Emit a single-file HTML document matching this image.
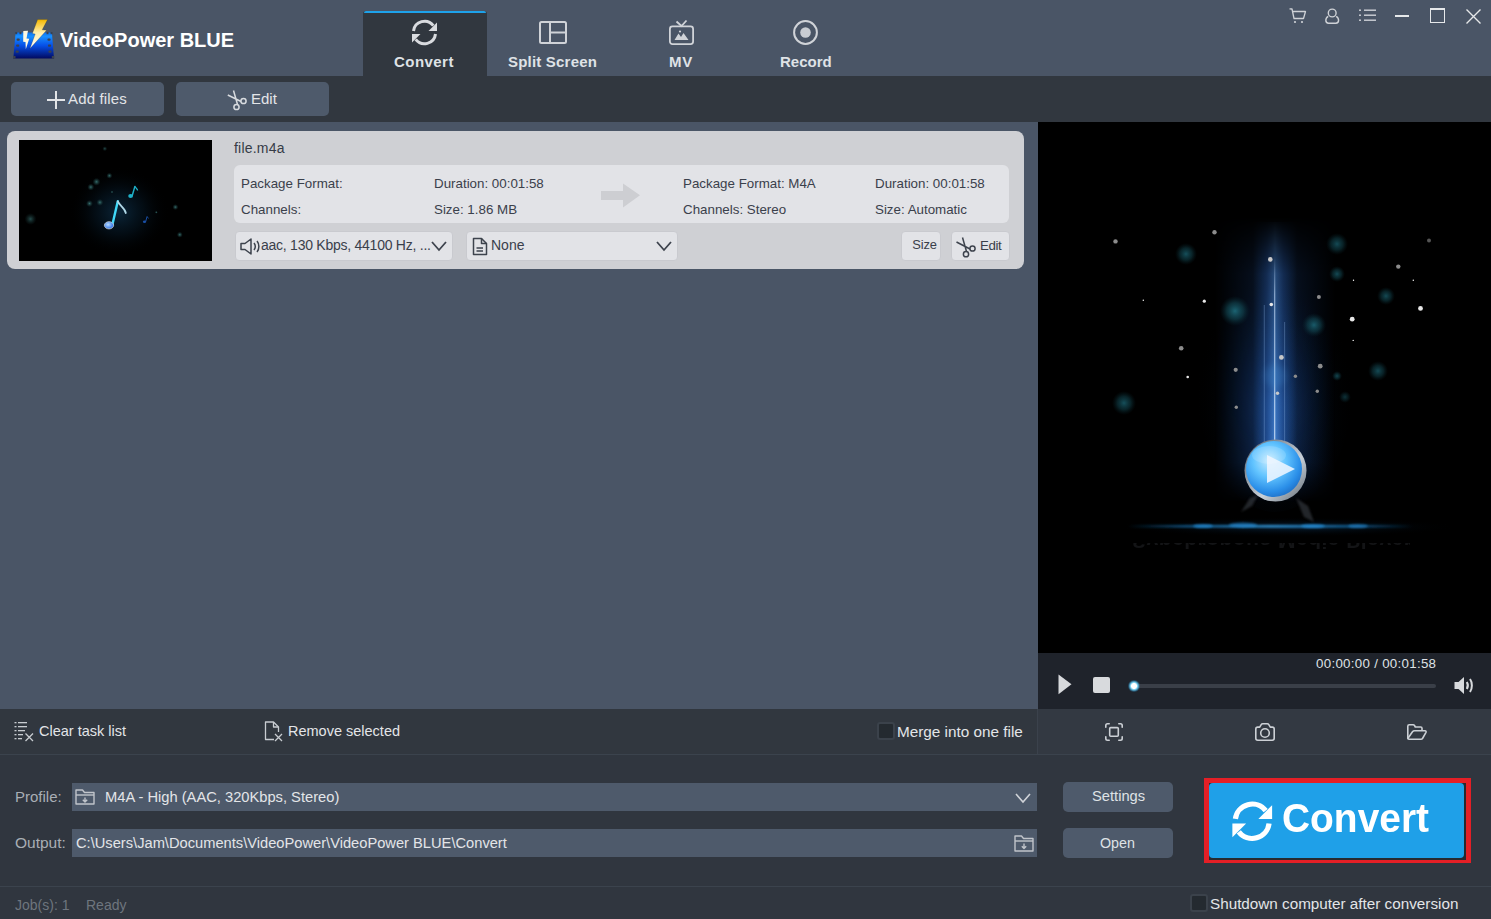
<!DOCTYPE html>
<html><head><meta charset="utf-8">
<style>
html,body{margin:0;padding:0;}
body{width:1491px;height:919px;overflow:hidden;position:relative;background:#30363f;font-family:"Liberation Sans",sans-serif;}
.a{position:absolute;}
.t{position:absolute;line-height:1;white-space:nowrap;}
svg{position:absolute;overflow:visible;}
.tab{color:#dfe2e6;font-weight:bold;font-size:15px;}
.ct{color:#3a404b;font-size:13.35px;}
.btn{position:absolute;background:#4e5a6b;border-radius:5px;}
.cbtn{position:absolute;background:#e2e3e7;border:1px solid #c9cacf;border-radius:4px;box-sizing:border-box;}
</style></head><body>

<!-- title bar -->
<div class="a" style="left:0;top:0;width:1491px;height:76px;background:#4a5566;"></div>
<!-- toolbar -->
<div class="a" style="left:0;top:76px;width:1491px;height:46px;background:#31373f;"></div>
<!-- list area -->
<div class="a" style="left:0;top:122px;width:1038px;height:587px;background:#4a5566;"></div>
<!-- preview -->
<div class="a" style="left:1038px;top:122px;width:453px;height:531px;background:#000;"></div>
<!-- player controls -->
<div class="a" style="left:1038px;top:653px;width:453px;height:56px;background:#1f232b;"></div>
<!-- action bar -->
<div class="a" style="left:0;top:709px;width:1491px;height:45px;background:#31373f;"></div>
<div class="a" style="left:1038px;top:709px;width:453px;height:45px;background:#333942;"></div>
<div class="a" style="left:1037px;top:709px;width:1px;height:45px;background:#3b424c;"></div>
<div class="a" style="left:0;top:754px;width:1491px;height:1px;background:#3b434d;"></div>
<!-- status line -->
<div class="a" style="left:0;top:886px;width:1491px;height:1px;background:#3b434d;"></div>

<!-- ===== TITLE BAR ===== -->
<!-- LOGO -->
<svg style="left:0;top:0" width="70" height="70" viewBox="0 0 70 70">
  <defs>
    <linearGradient id="lgBlue" x1="0" y1="0" x2="0" y2="1">
      <stop offset="0" stop-color="#0a70f0"/><stop offset="0.15" stop-color="#1890ff"/><stop offset="0.5" stop-color="#0650e8"/><stop offset="1" stop-color="#020a60"/>
    </linearGradient>
    <linearGradient id="lgBolt" x1="0" y1="0" x2="0" y2="1">
      <stop offset="0" stop-color="#f5b800"/><stop offset="0.45" stop-color="#ffeeaa"/><stop offset="1" stop-color="#ffffff"/>
    </linearGradient>
  </defs>
  <path d="M15.6 32.4 L51.9 32.4 L54 58.5 L13.3 58.5 Z" fill="url(#lgBlue)"/>
  <g fill="#3a4250">
    <rect x="15.2" y="32" width="2" height="2.2"/><rect x="19.5" y="32" width="2" height="2.2"/>
    <rect x="46.5" y="32" width="2" height="2.2"/><rect x="50.5" y="32" width="2" height="2.2"/>
    <rect x="16.6" y="38.5" width="3.2" height="2.2" rx="1"/><rect x="16.1" y="44.6" width="3.2" height="2.2" rx="1"/><rect x="15.6" y="50.6" width="3.2" height="2.2" rx="1"/>
    <rect x="47.4" y="38.5" width="3.2" height="2.2" rx="1"/><rect x="47.9" y="44.6" width="3.2" height="2.2" rx="1"/><rect x="48.4" y="50.6" width="3.2" height="2.2" rx="1"/>
    <rect x="13" y="56" width="2.5" height="2.6"/><rect x="51.8" y="56" width="2.5" height="2.6"/>
  </g>
  <path d="M37.6 19.6 L47.6 19.6 L42.2 29.8 L46.6 30.3 L30 48.5 L35.2 34 L32.4 33.5 Z" fill="url(#lgBolt)" stroke="#2a2a20" stroke-width="0.4" stroke-opacity="0.6"/>
  <path d="M23.3 31 L28 30.8 L26.5 38.5 L29.2 38.8 L25.8 49.3 L25.5 42 L23.2 41.8 Z" fill="#fff8e0"/>
</svg>
<div class="t" style="left:60px;top:29.8px;font-size:20px;font-weight:bold;color:#fff;">VideoPower BLUE</div>

<!-- TABS -->
<div class="a" style="left:363px;top:11px;width:124px;height:65px;background:#31373f;border-radius:3px 3px 0 0;"></div>
<div class="a" style="left:364px;top:11px;width:122px;height:2px;background:#1ea2ea;border-radius:2px 2px 0 0;"></div>

<!-- convert icon -->
<svg style="left:408px;top:16px" width="34" height="34" viewBox="0 0 34 34">
  <g fill="none" stroke="#d9dbdf" stroke-width="3">
    <path d="M5.5 15 A11.1 11.1 0 0 1 25.3 9.6"/>
    <path d="M27.5 18 A11.1 11.1 0 0 1 7.7 23.4"/>
  </g>
  <path d="M20.5 15 L29 15 L29 6.5 Z" fill="#d9dbdf"/>
  <path d="M4 18 L12.5 18 L4 26.5 Z" fill="#d9dbdf"/>
</svg>
<div class="t tab" style="left:394px;top:54px;letter-spacing:0.45px;">Convert</div>

<!-- split screen icon -->
<svg style="left:539px;top:21px" width="28" height="23" viewBox="0 0 28 23">
  <g fill="none" stroke="#d0d3d8" stroke-width="2">
    <rect x="1" y="1" width="26" height="21" rx="1.5"/>
    <path d="M11 1 V22 M11 11.5 H27"/>
  </g>
</svg>
<div class="t tab" style="left:508px;top:54px;letter-spacing:0.2px;">Split Screen</div>

<!-- MV icon -->
<svg style="left:669px;top:20px" width="25" height="25" viewBox="0 0 25 25">
  <g fill="none" stroke="#d0d3d8" stroke-width="1.8">
    <rect x="0.9" y="6.4" width="23.2" height="17.7" rx="2.5"/>
    <path d="M7.5 1.5 L12.5 6 L17.5 0.5"/>
  </g>
  <path d="M5.5 20 L9.5 13.5 L12 17 L14.5 13 L19.5 20 Z" fill="#d0d3d8"/>
  <circle cx="11" cy="11.5" r="1.1" fill="#d0d3d8"/>
</svg>
<div class="t tab" style="left:669px;top:54px;letter-spacing:0.7px;">MV</div>

<!-- record icon -->
<svg style="left:793px;top:20px" width="25" height="25" viewBox="0 0 25 25">
  <circle cx="12.5" cy="12.5" r="11.4" fill="none" stroke="#d0d3d8" stroke-width="2"/>
  <circle cx="12.5" cy="12.5" r="5.3" fill="#c8ccd2"/>
</svg>
<div class="t tab" style="left:780px;top:54px;">Record</div>

<!-- window controls -->
<svg style="left:1289px;top:8px" width="18" height="16" viewBox="0 0 18 16">
  <g fill="none" stroke="#cfd2d7" stroke-width="1.3" stroke-linejoin="round">
    <path d="M0.5 0.8 L3 1 L5 10.5 L14.5 10.5 L16.5 3.5 L3.8 3.5"/>
  </g>
  <circle cx="6" cy="14" r="1.1" fill="#cfd2d7"/><circle cx="13" cy="14" r="1.1" fill="#cfd2d7"/>
</svg>
<svg style="left:1325px;top:8px" width="15" height="16" viewBox="0 0 15 16">
  <g fill="none" stroke="#cfd2d7" stroke-width="1.4">
    <circle cx="7.2" cy="5" r="3.9"/>
    <path d="M3.2 8.3 C0 10 0 15.2 3.5 15.2 L10.9 15.2 C14.4 15.2 14.4 10 11.2 8.3"/>
  </g>
</svg>
<svg style="left:1359px;top:9px" width="17" height="13" viewBox="0 0 17 13">
  <g fill="#cfd2d7">
    <rect x="0" y="0.5" width="2" height="1.4"/><rect x="0" y="5.5" width="2" height="1.4"/><rect x="0" y="10.5" width="2" height="1.4"/>
    <rect x="5" y="0.5" width="12" height="1.4"/><rect x="5" y="5.5" width="12" height="1.4"/><rect x="5" y="10.5" width="12" height="1.4"/>
  </g>
</svg>
<div class="a" style="left:1395px;top:15px;width:14px;height:2px;background:#e6e8ea;"></div>
<div class="a" style="left:1430px;top:8px;width:13px;height:12px;border:1px solid #e6e8ea;border-top-width:2px;"></div>
<svg style="left:1466px;top:8.5px" width="15" height="15" viewBox="0 0 15 15">
  <path d="M0.5 0.5 L14.5 14.5 M14.5 0.5 L0.5 14.5" stroke="#e6e8ea" stroke-width="1.4"/>
</svg>

<!-- ===== TOOLBAR ===== -->
<div class="btn" style="left:11px;top:82px;width:153px;height:34px;"></div>
<div class="btn" style="left:176px;top:82px;width:153px;height:34px;"></div>
<svg style="left:47px;top:91px" width="18" height="18" viewBox="0 0 18 18">
  <path d="M9 0 V18 M0 9 H18" stroke="#e3e5e8" stroke-width="2"/>
</svg>
<div class="t" style="left:68px;top:91.3px;font-size:15px;color:#e3e5e8;letter-spacing:0.15px;">Add files</div>
<svg style="left:227px;top:90px" width="21" height="21" viewBox="0 0 21 21">
  <g fill="none" stroke="#d8dbdf" stroke-width="1.5">
    <circle cx="9.5" cy="17" r="2.6"/><circle cx="16.5" cy="11" r="2.6"/>
    <path d="M10.5 14.5 L6.5 0.5 M14 11.5 L0.8 5"/>
  </g>
</svg>
<div class="t" style="left:251px;top:91.3px;font-size:15px;color:#e3e5e8;">Edit</div>


<!-- ===== CARD ===== -->
<div class="a" style="left:7px;top:131px;width:1017px;height:138px;background:#cfd0d4;border-radius:8px;"></div>
<!-- thumbnail -->
<svg style="left:19px;top:140px" width="193" height="121" viewBox="0 0 193 121">
  <defs>
    <radialGradient id="thGlow" cx="0.5" cy="0.5" r="0.5">
      <stop offset="0" stop-color="#0c2a40" stop-opacity="0.9"/><stop offset="0.5" stop-color="#051420" stop-opacity="0.6"/><stop offset="1" stop-color="#000" stop-opacity="0"/>
    </radialGradient>
    <radialGradient id="dotG" cx="0.5" cy="0.5" r="0.5">
      <stop offset="0" stop-color="#3c7878" stop-opacity="0.9"/><stop offset="1" stop-color="#1a4040" stop-opacity="0"/>
    </radialGradient>
    <radialGradient id="headG" cx="0.4" cy="0.4" r="0.6">
      <stop offset="0" stop-color="#b8dcff"/><stop offset="1" stop-color="#2a70e8"/>
    </radialGradient>
  </defs>
  <rect width="193" height="121" fill="#000"/>
  <ellipse cx="100" cy="72" rx="50" ry="45" fill="url(#thGlow)"/>
  <circle cx="77.5" cy="41.8" r="4" fill="url(#dotG)"/>
  <circle cx="71.8" cy="47.1" r="3.5" fill="url(#dotG)"/>
  <circle cx="90.4" cy="35.7" r="3" fill="url(#dotG)"/>
  <circle cx="80.9" cy="62.4" r="3.5" fill="url(#dotG)"/>
  <circle cx="70.5" cy="63.5" r="3.5" fill="url(#dotG)"/>
  <circle cx="93" cy="52" r="1.5" fill="url(#dotG)"/>
  <circle cx="11.5" cy="79" r="6" fill="url(#dotG)" opacity="0.7"/>
  <circle cx="156.4" cy="67.1" r="3" fill="url(#dotG)"/>
  <circle cx="160.8" cy="94.7" r="3" fill="url(#dotG)"/>
  <circle cx="85.8" cy="8.7" r="2.5" fill="url(#dotG)" opacity="0.7"/>
  <circle cx="137.3" cy="72.3" r="1.5" fill="url(#dotG)"/>
  <path d="M98.8 61.2 L93.3 85" stroke="#40d8f8" stroke-width="2.4" stroke-linecap="round"/>
  <path d="M98.8 61.5 C101 66 106 68 106.8 73" stroke="#b0d8e8" stroke-width="1.8" fill="none" stroke-linecap="round"/>
  <ellipse cx="90" cy="85.3" rx="4.6" ry="3.6" fill="url(#headG)" stroke="#c8d0d8" stroke-width="0.8"/>
  <path d="M115.9 46.4 L113.3 55.4" stroke="#1eb0c8" stroke-width="1.5" stroke-linecap="round"/>
  <path d="M116 46.5 C117 48.5 118.6 49 118.6 50.5" stroke="#1eb0c8" stroke-width="1.2" fill="none"/>
  <ellipse cx="111.6" cy="56" rx="2.4" ry="1.9" fill="#1eb0c8"/>
  <path d="M128.1 76.5 L126.6 81.8" stroke="#1a50a8" stroke-width="1"/>
  <path d="M128.1 76.5 L129.5 78.5" stroke="#1a50a8" stroke-width="0.8"/>
  <ellipse cx="125.5" cy="81.8" rx="1.6" ry="1.3" fill="#1a50a8"/>
</svg>

<div class="t" style="left:234px;top:140.8px;font-size:14px;color:#363c47;letter-spacing:0.2px;">file.m4a</div>
<div class="a" style="left:234px;top:165px;width:775px;height:58px;background:#e2e3e7;border-radius:6px;"></div>
<div class="t ct" style="left:241px;top:177px;">Package Format:</div>
<div class="t ct" style="left:241px;top:202.6px;">Channels:</div>
<div class="t ct" style="left:434px;top:177px;">Duration: 00:01:58</div>
<div class="t ct" style="left:434px;top:202.6px;">Size: 1.86 MB</div>
<div class="t ct" style="left:683px;top:177px;">Package Format: M4A</div>
<div class="t ct" style="left:683px;top:202.6px;">Channels: Stereo</div>
<div class="t ct" style="left:875px;top:177px;">Duration: 00:01:58</div>
<div class="t ct" style="left:875px;top:202.6px;">Size: Automatic</div>
<!-- arrow -->
<svg style="left:601px;top:183px" width="40" height="25" viewBox="0 0 40 25">
  <path d="M0 8 H22 V0.5 L39 12.2 L22 24.5 V17 H0 Z" fill="#cdced2"/>
</svg>

<!-- dropdown 1 -->
<div class="cbtn" style="left:235px;top:231px;width:217.5px;height:30px;"></div>
<svg style="left:240px;top:238px" width="22" height="17" viewBox="0 0 22 17">
  <g fill="none" stroke="#3d434d" stroke-width="1.5" stroke-linejoin="round">
    <path d="M1 5.5 H5 L11 1 V16 L5 11.5 H1 Z"/>
    <path d="M14 5 C15.5 7 15.5 10 14 12"/>
    <path d="M17 3 C19.5 6 19.5 11 17 14"/>
  </g>
</svg>
<div class="t ct" style="left:261px;top:238px;font-size:14px;letter-spacing:-0.25px;">aac, 130 Kbps, 44100 Hz, ...</div>
<svg style="left:431px;top:241px" width="16" height="10" viewBox="0 0 16 10">
  <path d="M1 1 L8 9 L15 1" fill="none" stroke="#3d434d" stroke-width="1.8"/>
</svg>
<!-- dropdown 2 -->
<div class="cbtn" style="left:465.5px;top:231px;width:212px;height:30px;"></div>
<svg style="left:472px;top:237px" width="17" height="19" viewBox="0 0 17 19">
  <g fill="none" stroke="#3d434d" stroke-width="1.5" stroke-linejoin="round">
    <path d="M1.5 1.5 H9.5 L14.5 6.5 V17.5 H1.5 Z"/>
    <path d="M9.5 1.5 V6.5 H14.5"/>
    <path d="M4.5 11 H11 M4.5 14 H11"/>
  </g>
</svg>
<div class="t ct" style="left:491px;top:238px;font-size:14px;">None</div>
<svg style="left:656px;top:241px" width="16" height="10" viewBox="0 0 16 10">
  <path d="M1 1 L8 9 L15 1" fill="none" stroke="#3d434d" stroke-width="1.8"/>
</svg>
<!-- size / edit -->
<div class="cbtn" style="left:901px;top:231px;width:40px;height:30px;"></div>
<div class="t ct" style="left:912.3px;top:238.8px;font-size:12.9px;letter-spacing:-0.15px;">Size</div>
<div class="cbtn" style="left:951px;top:231px;width:59px;height:30px;"></div>
<svg style="left:955px;top:236px" width="22" height="22" viewBox="0 0 22 22">
  <g fill="none" stroke="#3d434d" stroke-width="1.5">
    <circle cx="11" cy="18.2" r="2.6"/><circle cx="17.5" cy="12.5" r="2.6"/>
    <path d="M11.5 15.5 L7.5 1.5 M15 13 L1.5 6"/>
  </g>
</svg>
<div class="t ct" style="left:980px;top:238.5px;font-size:13.3px;letter-spacing:-0.4px;">Edit</div>


<!-- ===== PREVIEW ===== -->
<svg style="left:1038px;top:122px" width="453" height="531" viewBox="0 0 453 531">
  <defs>
    <radialGradient id="beamGlow" cx="0.5" cy="0.62" r="0.5">
      <stop offset="0" stop-color="#1a4a90" stop-opacity="0.5"/>
      <stop offset="0.4" stop-color="#0c2a5a" stop-opacity="0.28"/>
      <stop offset="0.75" stop-color="#04101e" stop-opacity="0.12"/>
      <stop offset="1" stop-color="#000" stop-opacity="0"/>
    </radialGradient>
    <linearGradient id="beamH" x1="0" y1="0" x2="1" y2="0">
      <stop offset="0" stop-color="#2060c0" stop-opacity="0"/>
      <stop offset="0.3" stop-color="#2a66c8" stop-opacity="0.55"/>
      <stop offset="0.5" stop-color="#4a90e8" stop-opacity="0.95"/>
      <stop offset="0.7" stop-color="#2a66c8" stop-opacity="0.55"/>
      <stop offset="1" stop-color="#2060c0" stop-opacity="0"/>
    </linearGradient>
    <linearGradient id="beamV" x1="0" y1="0" x2="0" y2="1">
      <stop offset="0" stop-color="#fff" stop-opacity="0"/>
      <stop offset="0.2" stop-color="#fff" stop-opacity="0.6"/>
      <stop offset="0.6" stop-color="#fff" stop-opacity="0.8"/>
      <stop offset="0.86" stop-color="#fff" stop-opacity="1"/>
      <stop offset="1" stop-color="#fff" stop-opacity="0"/>
    </linearGradient>
    <linearGradient id="lineV" x1="0" y1="0" x2="0" y2="1"><stop offset="0" stop-color="#cfe4ff" stop-opacity="0"/><stop offset="0.2" stop-color="#cfe4ff" stop-opacity="0.55"/><stop offset="1" stop-color="#e0efff" stop-opacity="0.7"/></linearGradient>
    <mask id="beamMask"><rect x="150" y="95" width="180" height="285" fill="url(#beamV)"/></mask>
    <radialGradient id="tealDot" cx="0.5" cy="0.5" r="0.5">
      <stop offset="0" stop-color="#1e6e7e" stop-opacity="0.9"/><stop offset="0.55" stop-color="#14505c" stop-opacity="0.55"/><stop offset="1" stop-color="#0a3038" stop-opacity="0"/>
    </radialGradient>
    <radialGradient id="ballG" cx="0.42" cy="0.35" r="0.65">
      <stop offset="0" stop-color="#c8ecff"/>
      <stop offset="0.45" stop-color="#62c4ff"/>
      <stop offset="0.85" stop-color="#2a8ee8"/>
      <stop offset="1" stop-color="#2278d0"/>
    </radialGradient>
    <linearGradient id="rimG" x1="0" y1="0" x2="1" y2="1">
      <stop offset="0" stop-color="#505862"/><stop offset="0.6" stop-color="#c8d0d8"/><stop offset="1" stop-color="#606a74"/>
    </linearGradient>
    <linearGradient id="horizG" x1="0" y1="0" x2="1" y2="0">
      <stop offset="0" stop-color="#1a8ad8" stop-opacity="0"/>
      <stop offset="0.2" stop-color="#1a8ad8" stop-opacity="0.55"/>
      <stop offset="0.5" stop-color="#3aaaf0" stop-opacity="0.8"/>
      <stop offset="0.8" stop-color="#1a8ad8" stop-opacity="0.55"/>
      <stop offset="1" stop-color="#1a8ad8" stop-opacity="0"/>
    </linearGradient>
    <radialGradient id="horizGlow" cx="0.5" cy="0.5" r="0.5">
      <stop offset="0" stop-color="#0e4a80" stop-opacity="0.45"/><stop offset="1" stop-color="#000" stop-opacity="0"/>
    </radialGradient>
    <filter id="blur1" x="-50%" y="-50%" width="200%" height="200%"><feGaussianBlur stdDeviation="1.2"/></filter>
    <filter id="blur3" x="-50%" y="-50%" width="200%" height="200%"><feGaussianBlur stdDeviation="3"/></filter>
  </defs>
  <!-- broad glow behind beam -->
  <ellipse cx="237" cy="250" rx="80" ry="140" fill="url(#beamGlow)"/>
  <!-- beam -->
  <g mask="url(#beamMask)">
    <rect x="177" y="95" width="120" height="285" fill="url(#beamH)" opacity="0.4"/>
    <rect x="215" y="100" width="44" height="280" fill="url(#beamH)" opacity="0.85"/>
  </g>
  <rect x="236" y="135" width="1.3" height="187" fill="url(#lineV)"/>
  <rect x="225.8" y="183" width="0.9" height="140" fill="#9cc4f0" opacity="0.35"/>
  <rect x="246.2" y="200" width="0.9" height="125" fill="#9cc4f0" opacity="0.35"/>
  <!-- teal bokeh -->
  <circle cx="148" cy="132" r="11" fill="url(#tealDot)" opacity="0.8"/>
  <circle cx="299" cy="122" r="11" fill="url(#tealDot)" opacity="0.75"/>
  <circle cx="299" cy="152" r="8" fill="url(#tealDot)" opacity="0.75"/>
  <circle cx="197" cy="189" r="15" fill="url(#tealDot)"/>
  <circle cx="276" cy="203" r="12" fill="url(#tealDot)" opacity="0.9"/>
  <circle cx="348" cy="174" r="9" fill="url(#tealDot)" opacity="0.75"/>
  <circle cx="340" cy="249" r="10" fill="url(#tealDot)" opacity="0.75"/>
  <circle cx="86" cy="281" r="12" fill="url(#tealDot)" opacity="0.8"/>
  <circle cx="299" cy="254" r="5" fill="url(#tealDot)" opacity="0.7"/>
  <circle cx="307" cy="275" r="6" fill="url(#tealDot)" opacity="0.5"/>
  <circle cx="237" cy="254" r="11" fill="#4a9ae0" opacity="0.22" filter="url(#blur3)"/>
  <!-- stars -->
  <g fill="#8c8c8c">
    <circle cx="77.5" cy="119.4" r="2.2"/><circle cx="176.5" cy="110.3" r="2.2"/>
    <circle cx="391" cy="118.5" r="2" opacity="0.6"/><circle cx="360.3" cy="144.6" r="2.2"/>
    <circle cx="280.9" cy="175" r="2"/><circle cx="143.2" cy="226.2" r="2.3"/><circle cx="197.7" cy="247.8" r="2.1"/>
    <circle cx="282.2" cy="244.2" r="2.4"/>
    <circle cx="257.4" cy="254.3" r="1.7"/><circle cx="279.3" cy="269.3" r="1.7"/><circle cx="198.3" cy="285.3" r="1.7"/>
  </g>
  <g fill="#c8c8c8"><circle cx="243.4" cy="235.4" r="2.4"/><circle cx="239.5" cy="271.3" r="1.7"/><circle cx="232.3" cy="137.4" r="2.3"/></g>
  <g fill="#e8e8e8">
    <circle cx="166.3" cy="179.2" r="1.6"/><circle cx="233.3" cy="182.5" r="1.8"/><circle cx="382.5" cy="186.4" r="2.4"/>
    <circle cx="314.2" cy="197.2" r="2.4"/><circle cx="149.7" cy="255" r="1.3"/>
  </g>
  <g fill="#ffffff">
    <circle cx="105.3" cy="178.2" r="0.7"/><circle cx="315.5" cy="158.3" r="0.7"/><circle cx="375.3" cy="158.3" r="0.7"/><circle cx="315.2" cy="218.4" r="0.7"/>
  </g>
  <!-- horizon -->
  <ellipse cx="250" cy="405" rx="170" ry="10" fill="url(#horizGlow)"/>
  <rect x="90" y="403" width="285" height="2.5" fill="url(#horizG)" filter="url(#blur1)"/>
  <g fill="#2a98e8" filter="url(#blur1)">
    <ellipse cx="165" cy="404" rx="10" ry="2" opacity="0.6"/>
    <ellipse cx="205" cy="403" rx="14" ry="2.5" opacity="0.55"/>
    <ellipse cx="275" cy="404" rx="12" ry="2" opacity="0.6"/>
    <ellipse cx="320" cy="404" rx="10" ry="2" opacity="0.5"/>
  </g>
  <!-- splash -->
  <g fill="#3a3f46" filter="url(#blur1)" opacity="0.6">
    <path d="M203 390 L212 376 L220 373 L214 384 Z"/>
    <path d="M258 376 L270 384 L276 400 L266 395 Z"/>
  </g>
  <!-- faint reflection text -->
  
  <!-- ball -->
  <circle cx="237.5" cy="348.5" r="31" fill="url(#rimG)"/>
  <circle cx="236" cy="347" r="28" fill="url(#ballG)"/>
  <path d="M229 333 L257 347 L229 361 Z" fill="#eaf4ff" opacity="0.9"/>
  <ellipse cx="231" cy="333" rx="17" ry="9" fill="#ffffff" opacity="0.15"/>
</svg>

<div class="a" style="left:1132px;top:543px;width:278px;height:10px;overflow:hidden;">
  <div class="t" style="left:0;top:-12px;font-size:21px;font-weight:bold;color:#131416;transform:scaleY(-1);letter-spacing:0.5px;">Synchronous Media Player</div>
</div>
<!-- ===== PLAYER CONTROLS ===== -->
<div class="t" style="left:1316px;top:657.2px;font-size:13.3px;color:#dfe2e6;letter-spacing:0.3px;">00:00:00 / 00:01:58</div>
<svg style="left:1058px;top:674px" width="14" height="21" viewBox="0 0 14 21">
  <path d="M0.5 0.5 L13.5 10.3 L0.5 20.2 Z" fill="#d8dadd"/>
</svg>
<div class="a" style="left:1093px;top:676.5px;width:17px;height:16px;background:#d8dadd;border-radius:2px;"></div>
<div class="a" style="left:1134px;top:684px;width:302px;height:4px;background:#3a3f48;border-radius:2px;"></div>
<div class="a" style="left:1128px;top:680px;width:12px;height:12px;border-radius:50%;background:radial-gradient(circle,#ffffff 0,#ffffff 30%,#68c4e8 45%,rgba(40,130,180,0.4) 65%,rgba(0,0,0,0) 100%);"></div>
<svg style="left:1454px;top:676px" width="21" height="19" viewBox="0 0 21 19">
  <path d="M0.5 6 H4.5 L10 1 V18 L4.5 13 H0.5 Z" fill="#d8dadd"/>
  <g fill="none" stroke="#d8dadd" stroke-width="2">
    <path d="M12.8 6 C14 8 14 11 12.8 13"/>
    <path d="M16 3 C18.5 6.5 18.5 12.5 16 16"/>
  </g>
</svg>

<!-- ===== ACTION BAR ===== -->
<svg style="left:14px;top:721px" width="20" height="20" viewBox="0 0 20 20">
  <g fill="#c8ccd1">
    <rect x="0.5" y="1" width="2" height="1.3"/><rect x="4" y="1" width="9" height="1.3"/>
    <rect x="0.5" y="5" width="2" height="1.3"/><rect x="4" y="5" width="9" height="1.3"/>
    <rect x="0.5" y="9" width="2" height="1.3"/><rect x="4" y="9" width="7" height="1.3"/>
    <rect x="0.5" y="13" width="2" height="1.3"/><rect x="4" y="13" width="5" height="1.3"/>
    <rect x="0.5" y="17" width="2" height="1.3"/><rect x="4" y="17" width="4" height="1.3"/>
  </g>
  <path d="M11.5 12.5 L19 20 M19 12.5 L11.5 20" stroke="#c8ccd1" stroke-width="1.3"/>
</svg>
<div class="t" style="left:39px;top:724.2px;font-size:14.5px;color:#e3e5e8;">Clear task list</div>
<svg style="left:264px;top:721px" width="20" height="21" viewBox="0 0 20 21">
  <g fill="none" stroke="#c8ccd1" stroke-width="1.3" stroke-linejoin="round">
    <path d="M10 18.5 H1.5 V1 H9.5 L14.5 6 V11"/>
    <path d="M9.5 1 V6 H14.5"/>
  </g>
  <path d="M11 13 L18 20 M18 13 L11 20" stroke="#c8ccd1" stroke-width="1.3"/>
</svg>
<div class="t" style="left:288px;top:724.2px;font-size:14.5px;color:#e3e5e8;">Remove selected</div>
<div class="a" style="left:877px;top:722px;width:18px;height:18px;box-sizing:border-box;background:#242a30;border:2px solid #3b424b;border-radius:3px;"></div>
<div class="t" style="left:897px;top:724px;font-size:15.3px;color:#e3e5e8;">Merge into one file</div>
<!-- fullscreen -->
<svg style="left:1105px;top:723px" width="18" height="18" viewBox="0 0 18 18">
  <g fill="none" stroke="#ccd0d5" stroke-width="1.6" stroke-linecap="round">
    <path d="M0.8 4.2 V2.5 Q0.8 0.8 2.5 0.8 H4.2"/>
    <path d="M13.8 0.8 H15.5 Q17.2 0.8 17.2 2.5 V4.2"/>
    <path d="M17.2 13.8 V15.5 Q17.2 17.2 15.5 17.2 H13.8"/>
    <path d="M4.2 17.2 H2.5 Q0.8 17.2 0.8 15.5 V13.8"/>
    <rect x="4.7" y="4.6" width="8.6" height="8.6" rx="1"/>
  </g>
</svg>
<!-- camera -->
<svg style="left:1255px;top:723px" width="20" height="18" viewBox="0 0 20 18">
  <g fill="none" stroke="#ccd0d5" stroke-width="1.6" stroke-linejoin="round">
    <path d="M0.8 6 Q0.8 4.1 2.7 4.1 H4.7 L6.2 1.6 Q6.7 0.8 7.7 0.8 H12.3 Q13.3 0.8 13.8 1.6 L15.3 4.1 H17.3 Q19.2 4.1 19.2 6 V15.3 Q19.2 17.2 17.3 17.2 H2.7 Q0.8 17.2 0.8 15.3 Z"/>
    <circle cx="10" cy="10" r="4.3"/>
  </g>
</svg>
<!-- folder open -->
<svg style="left:1407px;top:724px" width="20" height="16" viewBox="0 0 20 16">
  <g fill="none" stroke="#ccd0d5" stroke-width="1.6" stroke-linejoin="round">
    <path d="M0.8 14.5 V2.2 Q0.8 0.8 2.2 0.8 H6.2 Q7 0.8 7.5 1.5 L8.3 3 H13.7 Q15 3 15 4.3 V6.8"/>
    <path d="M0.8 14.5 Q1.2 15.2 2.2 15.2 H14 Q15 15.2 15.5 14.5 L19 8.3 Q19.4 6.8 18 6.8 H7.5 Q6.3 6.8 5.5 7.8 Z"/>
  </g>
</svg>

<!-- ===== BOTTOM PANEL ===== -->
<div class="t" style="left:15px;top:789.3px;font-size:15px;color:#a9aeb5;">Profile:</div>
<div class="a" style="left:72px;top:783px;width:965px;height:28px;background:#4e5a6b;"></div>
<svg style="left:75px;top:789px" width="20" height="16" viewBox="0 0 20 16">
  <g fill="none" stroke="#c0c4ca" stroke-width="1.4" stroke-linejoin="round">
    <path d="M1 15 V1 H7.5 L9.5 3.5 H19 V15 Z"/>
    <path d="M1 6 H19"/>
    <path d="M10 8.5 V13 M7.8 10.8 L10 13 L12.2 10.8"/>
  </g>
</svg>
<div class="t" style="left:105px;top:789.5px;font-size:14.7px;color:#e3e5e8;">M4A - High (AAC, 320Kbps, Stereo)</div>
<svg style="left:1015px;top:793px" width="16" height="10" viewBox="0 0 16 10">
  <path d="M1 1 L8 9 L15 1" fill="none" stroke="#d0d3d8" stroke-width="1.6"/>
</svg>
<div class="t" style="left:15px;top:835.3px;font-size:15.5px;color:#a9aeb5;">Output:</div>
<div class="a" style="left:72px;top:829px;width:965px;height:28px;background:#4e5a6b;"></div>
<div class="t" style="left:76px;top:836px;font-size:14.68px;color:#e3e5e8;">C:\Users\Jam\Documents\VideoPower\VideoPower BLUE\Convert</div>
<svg style="left:1014px;top:835px" width="20" height="17" viewBox="0 0 20 17">
  <g fill="none" stroke="#c0c4ca" stroke-width="1.4" stroke-linejoin="round">
    <path d="M1 16 V1 H7.5 L9.5 3.5 H19 V16 Z"/>
    <path d="M1 6 H19"/>
    <path d="M10 8.5 V13.5 M7.8 11.3 L10 13.5 L12.2 11.3"/>
  </g>
</svg>
<div class="btn" style="left:1063px;top:782px;width:110px;height:30px;border-radius:5px;"></div>
<div class="t" style="left:1092px;top:789.3px;font-size:14.7px;color:#dfe2e6;">Settings</div>
<div class="btn" style="left:1063px;top:828px;width:110px;height:30px;border-radius:5px;"></div>
<div class="t" style="left:1100px;top:835.5px;font-size:14.3px;color:#dfe2e6;">Open</div>

<!-- big convert button -->
<div class="a" style="left:1204px;top:778px;width:267px;height:85px;background:#e41f26;"></div>
<div class="a" style="left:1209px;top:783px;width:257px;height:77px;background:#262a30;"></div>
<div class="a" style="left:1209px;top:783px;width:255px;height:75px;background:#1fa0e8;border-radius:4px;"></div>
<svg style="left:1226.6px;top:796px" width="52" height="52" viewBox="0 0 34 34">
  <g fill="none" stroke="#ffffff" stroke-width="3.4">
    <path d="M5.5 15 A11.1 11.1 0 0 1 25.3 9.6"/>
    <path d="M27.5 18 A11.1 11.1 0 0 1 7.7 23.4"/>
  </g>
  <path d="M20.5 15 L29.5 15 L29.5 6 Z" fill="#ffffff"/>
  <path d="M3.5 18 L12.5 18 L3.5 27 Z" fill="#ffffff"/>
</svg>
<div class="t" style="left:1282px;top:796.8px;font-size:41.5px;font-weight:bold;color:#ffffff;transform:scaleX(0.9375);transform-origin:0 0;">Convert</div>

<!-- ===== STATUS ===== -->
<div class="t" style="left:15px;top:897.5px;font-size:14px;color:#6e757e;">Job(s): 1</div>
<div class="t" style="left:86px;top:897.5px;font-size:14px;color:#6e757e;">Ready</div>
<div class="a" style="left:1190px;top:894px;width:18px;height:18px;box-sizing:border-box;background:#242a30;border:2px solid #3b424b;border-radius:3px;"></div>
<div class="t" style="left:1210px;top:896px;font-size:15.25px;color:#e3e5e8;">Shutdown computer after conversion</div>

</body></html>
